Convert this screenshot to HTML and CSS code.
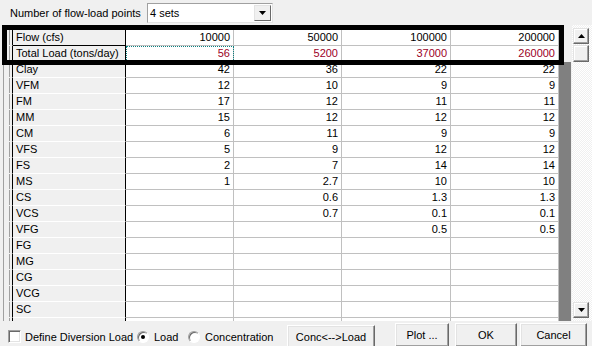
FILE: index.html
```html
<!DOCTYPE html>
<html lang="en">
<head>
    <meta charset="UTF-8">
    <title>Flow-Load Points</title>
    <link rel="stylesheet" href="styles.css">
</head>
<body>
    <div class="window">
        <div class="top-row">
            <span class="label">Number of flow-load points</span>
            <div class="combo">
                <span class="combo-value">4 sets</span>
                <span class="combo-btn">
                    <svg width="7" height="4" viewBox="0 0 7 4"><polygon points="0,0 7,0 3.5,4" fill="#000"/></svg>
                </span>
            </div>
        </div>

        <div class="grid-wrap">
            <div class="grid">
                <div class="sheet" id="sheet"></div>
            </div>
            <!-- selection frame around the flow / load rows -->
            <div class="selection"></div>
            <div class="scrollbar">
                <div class="sb-btn">
                    <svg width="7" height="4" viewBox="0 0 7 4"><polygon points="3.5,0 7,4 0,4" fill="#000"/></svg>
                </div>
                <div class="sb-thumb"></div>
                <div class="sb-track"></div>
                <div class="sb-btn">
                    <svg width="7" height="4" viewBox="0 0 7 4"><polygon points="0,0 7,0 3.5,4" fill="#000"/></svg>
                </div>
            </div>
        </div>

        <div class="bottom-row">
            <label class="check"><span class="box"></span>Define Diversion Load</label>
            <label class="radio radio-load"><span class="dot on"></span>Load</label>
            <label class="radio radio-conc"><span class="dot"></span>Concentration</label>
            <button class="btn btn-conc">Conc&lt;--&gt;Load</button>
            <button class="btn btn-plot">Plot ...</button>
            <button class="btn btn-ok">OK</button>
            <button class="btn btn-cancel">Cancel</button>
        </div>
    </div>

    <script>
        const rows = [
            ['Flow (cfs)', '10000', '50000', '100000', '200000'],
            ['Total Load (tons/day)', '56', '5200', '37000', '260000'],
            ['Clay', '42', '36', '22', '22'],
            ['VFM', '12', '10', '9', '9'],
            ['FM', '17', '12', '11', '11'],
            ['MM', '15', '12', '12', '12'],
            ['CM', '6', '11', '9', '9'],
            ['VFS', '5', '9', '12', '12'],
            ['FS', '2', '7', '14', '14'],
            ['MS', '1', '2.7', '10', '10'],
            ['CS', '', '0.6', '1.3', '1.3'],
            ['VCS', '', '0.7', '0.1', '0.1'],
            ['VFG', '', '', '0.5', '0.5'],
            ['FG', '', '', '', ''],
            ['MG', '', '', '', ''],
            ['CG', '', '', '', ''],
            ['VCG', '', '', '', ''],
            ['SC', '', '', '', ''],
            ['', '', '', '', '']
        ];

        const sheet = document.getElementById('sheet');

        rows.forEach((r, i) => {
            const row = document.createElement('div');
            row.className = i < 2 ? 'row row-top' : 'row';
            if (i === 1) row.classList.add('row-load');

            let html = '<div class="cell sel"></div><div class="cell head">' + r[0] + '</div>';
            for (let c = 1; c < r.length; c++) {
                const focus = (i === 1 && c === 1) ? ' focus' : '';
                html += '<div class="cell num' + focus + '">' + r[c] + '</div>';
            }
            html += '<div class="cell fill"></div>';
            row.innerHTML = html;
            sheet.appendChild(row);
        });
    </script>
</body>
</html>
```

FILE: styles.css
```css
/* General */
body {
    margin: 0;
    background: #f0f0f0;
    font-family: "Liberation Sans", Arial, sans-serif;
    font-size: 11px;
    color: #000;
}

.window {
    width: 592px;
    height: 346px;
    overflow: hidden;
}

/* Top combo row */
.top-row {
    display: flex;
    align-items: center;
    height: 25px;
    padding-left: 10px;
}

.label {
    width: 137px;
}

.combo {
    display: flex;
    justify-content: space-between;
    align-items: center;
    box-sizing: border-box;
    width: 126px;
    height: 20px;
    border: 1px solid #a0a0a0;
    border-right-color: #e3e3e3;
    border-bottom-color: #e3e3e3;
    background: #fff;
}

.combo-value {
    padding-left: 2px;
}

.combo-btn {
    display: flex;
    justify-content: center;
    align-items: center;
    box-sizing: border-box;
    width: 17px;
    height: 16px;
    margin-right: 1px;
    background: #f0f0f0;
    border: 1px solid;
    border-color: #e3e3e3 #696969 #696969 #e3e3e3;
}

/* Grid */
.grid-wrap {
    position: relative;
    display: flex;
    height: 296px;
}

.grid {
    width: 568px;
    margin-left: 3px;
    border-left: 1px solid #a0a0a0;
    box-sizing: border-box;
    overflow: hidden;
    background: #f0f0f0;
}

.sheet {
    padding-top: 5px;
}

.row {
    display: grid;
    grid-template-columns: 9px 113px 108px 108px 109px 108px 1fr;
    height: 16px;
}

.cell {
    box-sizing: border-box;
    height: 16px;
    line-height: 15px;
    border-right: 1px solid #c0c0c0;
    border-bottom: 1px solid #c0c0c0;
    white-space: nowrap;
    overflow: hidden;
}

.sel {
    background: #f0f0f0;
    border-right: 1px solid #000;
    border-bottom-color: #f0f0f0;
    box-shadow: inset 5px 0 0 #f0f0f0, inset 6px 0 0 #a0a0a0;
}

.head {
    padding-left: 3px;
    background: #f0f0f0;
    border-right: 1px solid #000;
    border-bottom-color: #fff;
}

.row-top .head {
    border-bottom-color: #000;
}

.num {
    padding-right: 3px;
    text-align: right;
    background: #fff;
}

.row-load .num {
    color: #9c0026;
}

.focus {
    outline: 1px dotted #0b8080;
    outline-offset: -1px;
}

.fill {
    border: none;
    background: #808080;
}

.row-top .fill {
    background: #f0f0f0;
}

.selection {
    position: absolute;
    left: 2px;
    top: 0;
    width: 562px;
    height: 40px;
    box-sizing: border-box;
    border: 5px solid #000;
}

/* Scrollbar */
.scrollbar {
    display: flex;
    flex-direction: column;
    width: 20px;
    margin-left: 1px;
    padding: 3px 0 3px 1px;
    box-sizing: border-box;
    background-image: repeating-conic-gradient(#fff 0 25%, #f0f0f0 0 50%);
    background-size: 2px 2px;
}

.sb-btn,
.sb-thumb {
    display: flex;
    justify-content: center;
    align-items: center;
    box-sizing: border-box;
    width: 16px;
    height: 16px;
    background: #f0f0f0;
    border: 1px solid;
    border-color: #e3e3e3 #696969 #696969 #e3e3e3;
    box-shadow: inset -1px -1px 0 #a0a0a0, inset 1px 1px 0 #fff;
}

.sb-thumb {
    height: 17px;
    margin-top: 1px;
}

.sb-track {
    flex: 1;
}

/* Bottom row */
.bottom-row {
    display: flex;
    align-items: flex-start;
    height: 25px;
}

.bottom-row > * {
    flex-shrink: 0;
    white-space: nowrap;
}

.check,
.radio {
    display: flex;
    align-items: center;
    box-sizing: border-box;
    margin-top: 9px;
    height: 13px;
}

.check {
    width: 137px;
    padding-left: 8px;
}

.radio-load {
    width: 51px;
}

.radio-conc {
    width: 99px;
}

.box {
    box-sizing: border-box;
    width: 13px;
    height: 13px;
    margin-right: 4px;
    background: #fff;
    border: 1px solid;
    border-color: #a0a0a0 #fff #fff #a0a0a0;
    box-shadow: inset 1px 1px 0 #696969, inset -1px -1px 0 #e3e3e3;
}

.dot {
    position: relative;
    box-sizing: border-box;
    width: 12px;
    height: 12px;
    margin-right: 5px;
    border-radius: 50%;
    background: #fff;
    border: 1px solid;
    border-color: #a0a0a0 #fff #fff #a0a0a0;
    box-shadow: inset 1px 1px 0 #696969;
}

.dot.on::after {
    content: "";
    position: absolute;
    left: 3px;
    top: 3px;
    width: 4px;
    height: 4px;
    border-radius: 50%;
    background: #000;
}

.btn {
    box-sizing: border-box;
    height: 24px;
    margin-top: 2px;
    padding: 0;
    font-family: inherit;
    font-size: 11px;
    color: #000;
    background: #f0f0f0;
    border: 1px solid;
    border-color: #fff #696969 #696969 #fff;
    box-shadow: inset -1px -1px 0 #a0a0a0, inset 1px 1px 0 #e3e3e3;
}

.btn-conc {
    width: 88px;
    margin-top: 4px;
}

.btn-plot {
    width: 54px;
    margin-left: 20px;
}

.btn-ok {
    width: 62px;
    margin-left: 6px;
}

.btn-cancel {
    width: 67px;
    margin-left: 3px;
}
```
